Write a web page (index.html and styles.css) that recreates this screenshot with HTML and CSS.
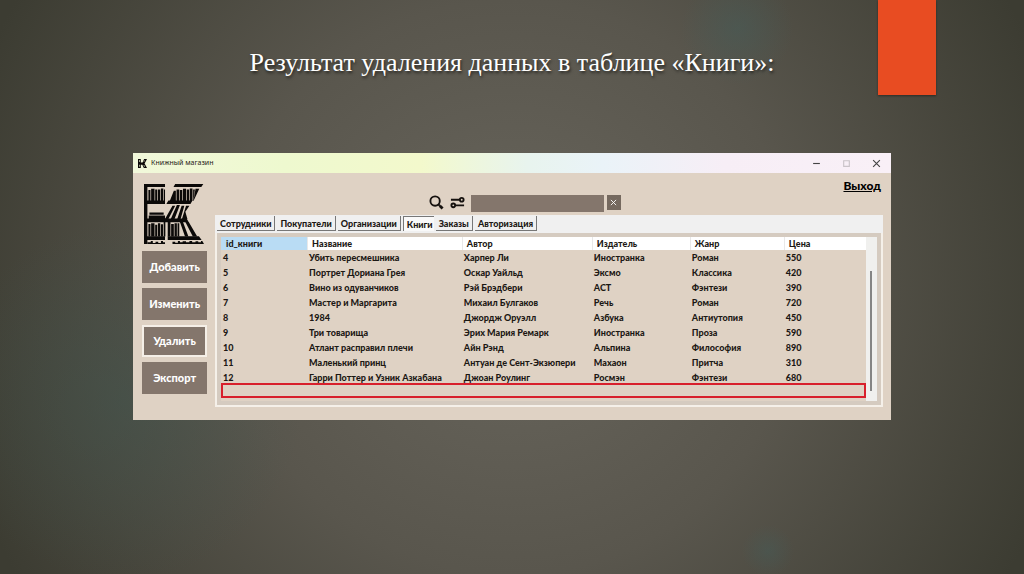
FILE: index.html
```html
<!DOCTYPE html>
<html lang="ru">

<head>
    <meta charset="UTF-8">
    <meta name="viewport" content="width=device-width, initial-scale=1.0">
    <title>Книжный магазин</title>
    <link rel="stylesheet" href="styles.css">
</head>

<body>

    <header class="slide-header">
        <h1>Результат удаления данных в таблице «Книги»:</h1>
        <div class="ribbon"></div>
    </header>

    <main class="window">
        <div class="title-bar">
            <svg class="title-icon" viewBox="0 0 177 177" aria-hidden="true">
                <path fill="#0b0908" d="M0 0H55V70H90L120 0H177L130 88L177 177H115L85 112H55V177H0Z"/>
                <path fill="#dfe8c4" d="M22 22H36V60H22ZM22 112H36V150H22ZM120 30H134L122 56H108ZM108 118H122L136 150H122Z"/>
            </svg>
            <span class="title-text">Книжный магазин</span>
            <div class="window-controls">
                <button type="button" aria-label="Свернуть">
                    <svg viewBox="0 0 8 8"><path d="M1 4h6"/></svg>
                </button>
                <button type="button" aria-label="Развернуть" disabled>
                    <svg viewBox="0 0 8 8"><path d="M1.5 1.5h5v5h-5z"/></svg>
                </button>
                <button type="button" aria-label="Закрыть">
                    <svg viewBox="0 0 8 8"><path d="M1 1l6 6M7 1l-6 6"/></svg>
                </button>
            </div>
        </div>

        <div class="window-body">
            <aside class="sidebar">
                <svg class="logo" viewBox="0 0 177 177" aria-hidden="true">
                    <!-- Shelves -->
                    <path fill="#0b0908" d="M0 0H62V9H10V49H62V59H10V102H126L132 113H10V154H62V165H10V177H0Z"/>
                    <path fill="#0b0908" d="M92 0H175L169 9H87ZM72 49H143L137 59H66ZM70 154H162L170 165H70Z"/>
                    <!-- Upright books, upper row -->
                    <path fill="#0b0908" d="M13 18H19V50H13ZM21 14H31V50H21ZM33 16H39V50H33ZM41 16H48V50H41ZM50 13H57V50H50ZM59 16H62V50H59Z"/>
                    <path fill="#0b0908" d="M88 20H94V50H76ZM96 16H104V50H96ZM106 18H113V50H106ZM115 14H124V50H115ZM126 16H133V50H126ZM135 13H143V50H135ZM145 16H150L146 50H145ZM152 14H163L146 50Z"/>
                    <!-- Middle row: a pile and the leaning books -->
                    <path fill="#0b0908" d="M16 84H58V91H16ZM14 93H62V103H14Z"/>
                    <path fill="#0b0908" d="M84 64H92L72 103H62ZM97 62H106L90 103H79ZM111 64H119L108 103H98ZM124 64H134L122 82L128 103H112Z"/>
                    <!-- Upright books, lower row -->
                    <path fill="#0b0908" d="M13 118H19V155H13ZM21 116H31V155H21ZM33 120H39V155H33ZM41 116H48V155H41ZM50 119H56V155H50ZM58 112H63V155H58Z"/>
                    <path fill="#0b0908" d="M70 112H78V155H70ZM80 118H88V155H80ZM90 116H97V155H90ZM99 116H104V155H99ZM106 112H115L131 155H121ZM122 112H132L157 155H144Z"/>
                    <!-- Book tops cut by the lower edge -->
                    <path fill="#0b0908" d="M10 177V172H20V168H26V174H34V170H42V174H50V168H56V172H62V177ZM84 177V170H92V173H100V168H106V172H114V169H124V172H134V168H142V172H152V169H160V172H168V168H172L177 177Z"/>
                </svg>
                <nav class="actions">
                    <button type="button">Добавить</button>
                    <button type="button">Изменить</button>
                    <button type="button" class="focused">Удалить</button>
                    <button type="button">Экспорт</button>
                </nav>
            </aside>

            <section class="content">
                <a class="exit" href="#">Выход</a>

                <form class="search">
                    <svg class="icon" viewBox="0 0 16 16" aria-hidden="true">
                        <circle cx="6.5" cy="6.5" r="5"/>
                        <path d="M10 10l1.500 1.500"/>
                        <path class="handle" d="M11.500 11.500l3 3"/>
                    </svg>
                    <svg class="icon" viewBox="0 0 16 16" aria-hidden="true">
                        <path d="M1 5h9M6 11h9"/>
                        <circle cx="12.500" cy="5" r="2"/>
                        <circle cx="3.500" cy="11" r="2"/>
                    </svg>
                    <input type="text" aria-label="Поиск">
                    <button type="button" aria-label="Очистить">
                        <svg viewBox="0 0 8 8"><path d="M1 1l6 6M7 1l-6 6"/></svg>
                    </button>
                </form>

                <div class="tabs">
                    <button type="button">Сотрудники</button>
                    <button type="button">Покупатели</button>
                    <button type="button">Организации</button>
                    <button type="button" class="active">Книги</button>
                    <button type="button">Заказы</button>
                    <button type="button">Авторизация</button>
                </div>

                <div class="panel">
                    <div class="list">
                        <table>
                            <colgroup>
                                <col>
                                <col>
                                <col>
                                <col>
                                <col>
                                <col>
                            </colgroup>
                            <thead>
                                <tr>
                                    <th class="sorted">id_книги</th>
                                    <th>Название</th>
                                    <th>Автор</th>
                                    <th>Издатель</th>
                                    <th>Жанр</th>
                                    <th>Цена</th>
                                </tr>
                            </thead>
                            <tbody>
                                <tr><td>4</td><td>Убить пересмешника</td><td>Харпер Ли</td><td>Иностранка</td><td>Роман</td><td>550</td></tr>
                                <tr><td>5</td><td>Портрет Дориана Грея</td><td>Оскар Уайльд</td><td>Эксмо</td><td>Классика</td><td>420</td></tr>
                                <tr><td>6</td><td>Вино из одуванчиков</td><td>Рэй Брэдбери</td><td>АСТ</td><td>Фэнтези</td><td>390</td></tr>
                                <tr><td>7</td><td>Мастер и Маргарита</td><td>Михаил Булгаков</td><td>Речь</td><td>Роман</td><td>720</td></tr>
                                <tr><td>8</td><td>1984</td><td>Джордж Оруэлл</td><td>Азбука</td><td>Антиутопия</td><td>450</td></tr>
                                <tr><td>9</td><td>Три товарища</td><td>Эрих Мария Ремарк</td><td>Иностранка</td><td>Проза</td><td>590</td></tr>
                                <tr><td>10</td><td>Атлант расправил плечи</td><td>Айн Рэнд</td><td>Альпина</td><td>Философия</td><td>890</td></tr>
                                <tr><td>11</td><td>Маленький принц</td><td>Антуан де Сент-Экзюпери</td><td>Махаон</td><td>Притча</td><td>310</td></tr>
                                <tr><td>12</td><td>Гарри Поттер и Узник Азкабана</td><td>Джоан Роулинг</td><td>Росмэн</td><td>Фэнтези</td><td>680</td></tr>
                            </tbody>
                        </table>
                        <div class="deleted-row"></div>
                    </div>
                    <div class="scrollbar"><div class="thumb"></div></div>
                </div>
            </section>
        </div>
    </main>

</body>

</html>
```

FILE: styles.css
```css
* {
    box-sizing: border-box;
}

body {
    margin: 0;
    min-height: 100vh;
    font-family: Lato, "Noto Sans", sans-serif;
    font-size: 9px;
    color: #1c1814;
    /* Soft glows over the dark slide */
    background:
        radial-gradient(circle at 12% 70%, rgba(62, 88, 82, 0.4), transparent 180px),
        radial-gradient(circle at 72% 5%, rgba(66, 96, 94, 0.4), transparent 56px),
        radial-gradient(circle at 75% 96%, rgba(66, 96, 94, 0.35), transparent 26px),
        radial-gradient(ellipse 56% 100% at 50% 50%, #69665d 0%, #59564d 50%, #3c3c32 100%);
}

button,
input {
    margin: 0;
    padding: 0;
    border: 0;
    border-radius: 0;
    font: inherit;
    color: inherit;
    background: none;
}

svg {
    display: block;
}

/* Slide heading and the corner ribbon share one grid cell */
.slide-header {
    display: grid;
    height: 153px;
}

.slide-header h1 {
    grid-area: 1 / 1;
    justify-self: center;
    margin: 0;
    padding-top: 48px;
    font: 400 26px/30px "Liberation Serif", serif;
    color: #fff;
    text-shadow: 1px 2px 3px rgba(0, 0, 0, 0.6);
    white-space: nowrap;
}

.ribbon {
    grid-area: 1 / 1;
    justify-self: end;
    width: 58px;
    height: 95px;
    margin-right: 88px;
    background: #e84c22;
    box-shadow: 0 1px 2px rgba(0, 0, 0, 0.4);
}

.window {
    margin: 0 13%;
    background: #dfd2c4;
}

.title-bar {
    display: flex;
    align-items: center;
    gap: 4px;
    height: 20px;
    padding: 0 10px 0 5px;
    background: linear-gradient(90deg, #f1f8da 0%, #eef9cf 20%, #f3f9cc 38%, #e8f4ee 52%, #eaf3f8 62%, #f7eef6 78%, #f9f0f7 100%);
}

.title-icon {
    width: 9px;
    height: 9px;
}

.title-text {
    font: 400 7px/10px "Noto Sans", sans-serif;
}

.window-controls {
    display: flex;
    gap: 21px;
    margin-left: auto;
}

.window-controls button {
    width: 9px;
    height: 9px;
}

.window-controls svg {
    width: 9px;
    height: 9px;
    fill: none;
    stroke: #444;
}

.window-controls button:disabled {
    opacity: 0.25;
}

.window-body {
    display: flex;
    gap: 8px;
    padding: 11px 8px 13px 9px;
}

.sidebar {
    width: 65px;
}

.logo {
    width: 60px;
    height: 60px;
    margin-left: 2px;
}

.actions {
    display: grid;
    gap: 5px;
    margin-top: 7px;
}

.actions button {
    height: 32px;
    padding-bottom: 1px;
    font-size: 11px;
    font-weight: 900;
    color: #fff;
    background: #84766c;
}

.actions .focused {
    border: 2px solid #f5efe7;
}

.content {
    flex: 1;
    min-width: 0;
    margin-top: -6px;
}

.exit {
    display: block;
    width: fit-content;
    margin-left: auto;
    margin-right: 2px;
    font-size: 12px;
    line-height: 15px;
    font-weight: 900;
    color: #000;
}

.search {
    display: flex;
    gap: 6px;
    width: 192px;
    margin: 2px auto 3px 32%;
}

.search .icon {
    width: 15px;
    height: 15px;
    fill: none;
    stroke: #15110e;
    stroke-width: 2;
}

.search .handle {
    stroke-width: 3;
}

.search input {
    flex: 1;
    min-width: 0;
    height: 17px;
    color: #fff;
    background: #84766c;
}

.search button {
    display: grid;
    place-items: center;
    width: 14px;
    height: 15px;
    margin-left: -3px;
    background: #75695f;
}

.search button svg {
    width: 7px;
    height: 7px;
    fill: none;
    stroke: #fff;
}

.tabs {
    display: flex;
    gap: 2px;
    height: 18px;
    padding: 1px 2px;
    background: #f0f0f0;
}

.tabs button {
    height: 15px;
    padding: 0 3px;
    font-weight: 900;
    border-right: 1px solid #777;
    border-bottom: 1px solid #777;
}

.tabs .active {
    padding-right: 1px;
    border: 1px solid #777;
    border-right: 0;
    border-bottom: 0;
    background: #f9f9f9;
}

.panel {
    display: flex;
    padding: 4px;
    border: 2px solid #f5f0e9;
    border-top: 0;
    background: #d5cbc0;
}

.list {
    flex: 1;
    min-width: 0;
    padding-bottom: 3px;
    background: #dfd2c4;
}

table {
    width: 100%;
    border-collapse: collapse;
    table-layout: fixed;
}

col:nth-child(1) { width: 86px; }
col:nth-child(2) { width: 24%; }
col:nth-child(3) { width: 130px; }
col:nth-child(4) { width: 98px; }
col:nth-child(5) { width: 94px; }
col:nth-child(6) { width: auto; }

th,
td {
    height: 15px;
    padding: 0 2px;
    line-height: 13px;
    font-weight: 900;
    text-align: left;
    white-space: nowrap;
}

th {
    height: 13px;
    padding-left: 5px;
    background: #fff;
    box-shadow: inset 1px 0 #e8e8e8;
}

.sorted {
    background: #b9dcf4;
    box-shadow: none;
}

/* Frame around the place of the removed record */
.deleted-row {
    height: 15px;
    margin-top: -2px;
    border: 2px solid #d8202c;
}

.scrollbar {
    width: 11px;
    padding: 34px 4px 10px;
    background: #f0f0ee;
}

.thumb {
    width: 2px;
    height: 100%;
    background: #858585;
}
```
